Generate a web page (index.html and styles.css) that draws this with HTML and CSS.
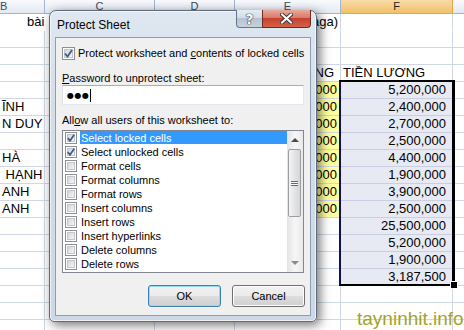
FILE: index.html
```html
<!DOCTYPE html>
<html lang="vi">

<head>
  <meta charset="UTF-8">
  <title>Protect Sheet</title>
  <link rel="stylesheet" href="styles.css">
</head>

<body>
  <div class="screen">
    <table class="sheet">
      <colgroup>
        <col class="col-b"><col class="col-c"><col class="col-d"><col class="col-e"><col class="col-f"><col class="col-g">
      </colgroup>
      <thead>
        <tr><th class="head-b">B</th><th>C</th><th>D</th><th>E</th><th class="head-sel">F</th><th></th></tr>
      </thead>
      <tbody>
        <tr class="row-title">
          <td colspan="4"><div class="title-cell"><span>bài</span><span>(Saga)</span></div></td>
          <td></td><td></td>
        </tr>
        <tr><td></td><td></td><td></td><td></td><td></td><td></td></tr>
        <tr><td></td><td></td><td></td><td></td><td></td><td></td></tr>
        <tr><td></td><td></td><td></td><td class="num">LƯƠNG</td><td>TIỀN LƯƠNG</td><td></td></tr>
        <tr><td></td><td></td><td></td><td class="num fill">1,300,000</td><td class="num pick">5,200,000</td><td></td></tr>
        <tr><td>ĨNH</td><td></td><td></td><td class="num fill">1,200,000</td><td class="num pick">2,400,000</td><td></td></tr>
        <tr><td>N DUY</td><td></td><td></td><td class="num fill">1,350,000</td><td class="num pick">2,700,000</td><td></td></tr>
        <tr><td></td><td></td><td></td><td class="num fill">1,250,000</td><td class="num pick">2,500,000</td><td></td></tr>
        <tr><td>HÀ</td><td></td><td></td><td class="num fill">1,100,000</td><td class="num pick">4,400,000</td><td></td></tr>
        <tr><td>&nbsp;HẠNH</td><td></td><td></td><td class="num fill">1,900,000</td><td class="num pick">1,900,000</td><td></td></tr>
        <tr><td>ANH</td><td></td><td></td><td class="num fill">1,300,000</td><td class="num pick">3,900,000</td><td></td></tr>
        <tr><td>ANH</td><td></td><td></td><td class="num fill">1,250,000</td><td class="num pick">2,500,000</td><td></td></tr>
        <tr><td></td><td></td><td></td><td></td><td class="num pick">25,500,000</td><td></td></tr>
        <tr><td></td><td></td><td></td><td></td><td class="num pick">5,200,000</td><td></td></tr>
        <tr><td></td><td></td><td></td><td></td><td class="num pick">1,900,000</td><td></td></tr>
        <tr><td></td><td></td><td></td><td></td><td class="num pick">3,187,500</td><td></td></tr>
        <tr><td></td><td></td><td></td><td></td><td></td><td></td></tr>
        <tr><td></td><td></td><td></td><td></td><td></td><td></td></tr>
        <tr><td></td><td></td><td></td><td></td><td></td><td></td></tr>
      </tbody>
    </table>

    <!-- selection outline over F5:F16 -->
    <div class="selection"><span class="handle"></span></div>

    <div class="dialog">
      <div class="caption">
        <span class="caption-text">Protect Sheet</span>
        <div class="caption-buttons">
          <span class="cap-btn help">?</span>
          <span class="cap-btn close">
            <svg width="13" height="11" viewBox="0 0 13 11">
              <path d="M2 1.5 L11 9.5 M11 1.5 L2 9.5" stroke="#3b3b3b" stroke-width="4" stroke-linecap="square" />
              <path d="M2 1.5 L11 9.5 M11 1.5 L2 9.5" stroke="#fff" stroke-width="2" stroke-linecap="square" />
            </svg>
          </span>
        </div>
      </div>

      <div class="client">
        <div class="check-row">
          <span class="box checked">
            <svg width="9" height="9" viewBox="0 0 9 9"><path d="M1 4.5 L3.5 7.5 L8 1" fill="none" stroke="#3d5a8c" stroke-width="1.8" /></svg>
          </span>
          <span class="check-text">Protect worksheet and <u>c</u>ontents of locked cells</span>
        </div>

        <div class="field-label"><u>P</u>assword to unprotect sheet:</div>
        <div class="password"><span class="dots">●●●</span><span class="caret"></span></div>

        <div class="field-label list-label">All<u>o</u>w all users of this worksheet to:</div>
        <div class="listbox">
          <ul class="items">
            <li class="selected"><span class="box small checked"><svg width="8" height="8" viewBox="0 0 8 8"><path d="M0.8 4 L3 6.8 L7.2 0.8" fill="none" stroke="#3d5a8c" stroke-width="1.7" /></svg></span><span class="item-text">Select locked cells</span></li>
            <li><span class="box small checked"><svg width="8" height="8" viewBox="0 0 8 8"><path d="M0.8 4 L3 6.8 L7.2 0.8" fill="none" stroke="#3d5a8c" stroke-width="1.7" /></svg></span><span class="item-text">Select unlocked cells</span></li>
            <li><span class="box small"></span><span class="item-text">Format cells</span></li>
            <li><span class="box small"></span><span class="item-text">Format columns</span></li>
            <li><span class="box small"></span><span class="item-text">Format rows</span></li>
            <li><span class="box small"></span><span class="item-text">Insert columns</span></li>
            <li><span class="box small"></span><span class="item-text">Insert rows</span></li>
            <li><span class="box small"></span><span class="item-text">Insert hyperlinks</span></li>
            <li><span class="box small"></span><span class="item-text">Delete columns</span></li>
            <li><span class="box small"></span><span class="item-text">Delete rows</span></li>
          </ul>
          <div class="scrollbar">
            <span class="arrow up"></span>
            <div class="track">
              <div class="thumb"><span class="grip"></span></div>
            </div>
            <span class="arrow down"></span>
          </div>
        </div>

        <div class="buttons">
          <button class="btn default">OK</button>
          <button class="btn">Cancel</button>
        </div>
      </div>
    </div>

    <div class="watermark">tayninhit.info</div>
  </div>
</body>

</html>
```

FILE: styles.css
```css
body {
  margin: 0;
  background: #fff;
  font-family: "Liberation Sans", Arial, sans-serif;
}

.screen {
  position: relative;
  width: 464px;
  height: 330px;
  overflow: hidden;
}

/* spreadsheet behind the dialog */
.sheet {
  border-collapse: separate;
  border-spacing: 0;
  table-layout: fixed;
  width: 513px;
  font-size: 13px;
  color: #000;
}

.col-b { width: 45px; }
.col-c { width: 110px; }
.col-d { width: 80px; }
.col-e { width: 106px; }
.col-f { width: 112px; }
.col-g { width: 60px; }

.sheet th {
  height: 14px;
  box-sizing: border-box;
  padding: 0;
  font-weight: normal;
  font-size: 11px;
  line-height: 13px;
  color: #3b4a5c;
  background: linear-gradient(#f8fafd, #e3e9f2);
  border-right: 1px solid #9eb6ce;
  border-bottom: 1px solid #9eb6ce;
}

.sheet .head-b {
  text-align: right;
  padding-right: 43px;
}

.sheet .head-sel {
  background: linear-gradient(#f9dba6, #f2c06c);
  border-right-color: #e8a54c;
  border-bottom-color: #e8a54c;
  color: #222;
}

.sheet td {
  height: 17px;
  box-sizing: border-box;
  padding: 0 2px;
  line-height: 16px;
  white-space: nowrap;
  overflow: hidden;
  border-right: 1px solid #d0d7e5;
  border-bottom: 1px solid #d0d7e5;
}

.sheet .row-title td {
  border-bottom-color: transparent;
  overflow: visible;
}

.title-cell {
  display: flex;
  justify-content: space-between;
  padding-left: 25px;
}

.sheet .num {
  text-align: right;
  padding-right: 6px;
}

.sheet .fill {
  background: #ffff9c;
  padding-right: 3px;
}

.sheet .pick {
  background: #e8eaf3;
  border-bottom-color: #c9cfe2;
}

.selection {
  position: absolute;
  left: 339px;
  top: 80px;
  width: 116px;
  height: 206px;
  box-sizing: border-box;
  border: 2px solid #000;
  border-left-color: #10105a;
  border-right-width: 3px;
}

.handle {
  position: absolute;
  right: -6px;
  bottom: -5px;
  width: 6px;
  height: 6px;
  background: #000;
  border: 1px solid #fff;
}

/* protect sheet dialog */
.dialog {
  position: absolute;
  left: 49px;
  top: 10px;
  width: 268px;
  height: 312px;
  box-sizing: border-box;
  display: flex;
  flex-direction: column;
  padding: 0 5px 5px 5px;
  border: 1px solid #5d6b7c;
  border-radius: 7px 7px 5px 5px;
  background: linear-gradient(180deg, #dfe8f1 0%, #d3dee9 30%, #ccd8e5 100%);
  box-shadow: inset 0 0 0 1px rgba(255, 255, 255, 0.65), 3px 3px 11px rgba(0, 0, 0, 0.55);
}

.caption {
  position: relative;
  height: 26px;
  flex: none;
}

.caption-text {
  position: absolute;
  left: 2px;
  top: 7px;
  font-size: 12px;
  color: #000;
}

.caption-buttons {
  position: absolute;
  right: 0;
  top: -1px;
  display: flex;
}

.cap-btn {
  height: 18px;
  display: flex;
  align-items: center;
  justify-content: center;
  box-sizing: border-box;
  border: 1px solid #65768c;
  border-top: none;
}

.help {
  width: 26px;
  border-right: none;
  border-radius: 0 0 0 4px;
  background: linear-gradient(#e4ecf4 0%, #d2dde8 45%, #b4c3d3 50%, #c5d3e0 100%);
  font: bold 14px "DejaVu Sans", sans-serif;
  color: #fff;
  text-shadow: 0 0 1px #333, 0 0 1px #333, 0 0 1px #333;
}

.close {
  width: 49px;
  border-color: #6a2c25;
  border-radius: 0 0 4px 0;
  background: linear-gradient(#e8a99b 0%, #d97c6a 45%, #c8412c 50%, #d3624c 100%);
}

.client {
  flex: 1;
  box-sizing: border-box;
  border: 1px solid #8e9eb2;
  background: #f0f0f0;
  padding: 9px 6px 0 6px;
  display: flex;
  flex-direction: column;
  font-size: 11px;
  color: #000;
}

.check-row {
  display: flex;
  align-items: center;
  gap: 3px;
  height: 13px;
  line-height: 13px;
}

.check-text {
  white-space: nowrap;
}

.box {
  position: relative;
  flex: none;
  width: 13px;
  height: 13px;
  box-sizing: border-box;
  border: 1px solid #8e8f8f;
  background: #fff;
  display: flex;
  align-items: center;
  justify-content: center;
}

.box::before {
  content: "";
  position: absolute;
  inset: 1px;
  border: 1px solid #c2c6cc;
  background: linear-gradient(135deg, #d3d6da, #f6f6f7);
}

.box svg {
  position: relative;
}

.box.small {
  width: 12px;
  height: 12px;
}

.field-label {
  margin-top: 12px;
  line-height: 13px;
}

.password {
  height: 20px;
  box-sizing: border-box;
  border: 1px solid #abadb3;
  border-color: #abadb3 #e3e9ef #e3e9ef #e2e3ea;
  background: #fff;
  display: flex;
  align-items: center;
  padding-left: 4px;
}

.dots {
  font: 8px "DejaVu Sans", sans-serif;
  letter-spacing: 0.5px;
}

.caret {
  width: 1px;
  height: 13px;
  margin-left: 1px;
  background: #000;
}

.list-label {
  margin-top: 9px;
}

.listbox {
  margin-top: 3px;
  height: 143px;
  box-sizing: border-box;
  border: 1px solid #828790;
  background: #fff;
  display: flex;
}

.items {
  flex: 1 1 auto;
  min-width: 0;
  list-style: none;
  margin: 0;
  padding: 0;
}

.items li {
  height: 14px;
  display: flex;
  align-items: center;
  padding-left: 2px;
}

.item-text {
  margin-left: 4px;
  line-height: 13px;
}

/* highlight runs from after the checkbox to the scrollbar */
.items li.selected {
  background: linear-gradient(90deg, transparent 17px, #3399ff 17px) no-repeat 0 0 / 100% 13px;
  color: #fff;
}

.scrollbar {
  flex: none;
  width: 16px;
  display: flex;
  flex-direction: column;
  background: linear-gradient(90deg, #e4e4e6, #f6f6f7 50%, #e9e9eb);
}

.arrow {
  flex: none;
  height: 17px;
  width: 16px;
  position: relative;
}

.arrow::after {
  content: "";
  position: absolute;
  left: 4px;
  border-left: 4px solid transparent;
  border-right: 4px solid transparent;
}

.arrow.up::after {
  top: 7px;
  border-bottom: 4px solid #4b4b4b;
}

.arrow.down::after {
  top: 6px;
  border-top: 4px solid #8a8a8a;
}

.track {
  flex: 1;
  padding-top: 1px;
}

.thumb {
  width: 13px;
  height: 68px;
  margin-left: 1px;
  box-sizing: border-box;
  border: 1px solid #9a9da2;
  border-radius: 2px;
  background: linear-gradient(90deg, #f4f4f5, #e4e4e6 50%, #d5d6d8);
  display: flex;
  align-items: center;
  justify-content: center;
}

.grip {
  width: 7px;
  height: 5px;
  background: repeating-linear-gradient(#6a6a6a 0 1px, #fafafa 1px 2px);
}

.buttons {
  margin-top: 12px;
  margin-right: -1px;
  display: flex;
  justify-content: flex-end;
  gap: 11px;
}

.btn {
  width: 73px;
  height: 22px;
  box-sizing: border-box;
  font: 11px "Liberation Sans", Arial, sans-serif;
  color: #000;
  border: 1px solid #707070;
  border-radius: 3px;
  background: linear-gradient(#f2f2f2 0%, #ebebeb 48%, #dddddd 52%, #cfcfcf 100%);
  box-shadow: inset 0 0 0 1px #fcfcfc;
  padding: 0;
}

.btn.default {
  border-color: #3c7fb1;
  box-shadow: inset 0 0 0 1px #93dcf6;
}

.watermark {
  position: absolute;
  left: 357px;
  top: 308px;
  font-size: 19px;
  color: #a3a32a;
}
```
